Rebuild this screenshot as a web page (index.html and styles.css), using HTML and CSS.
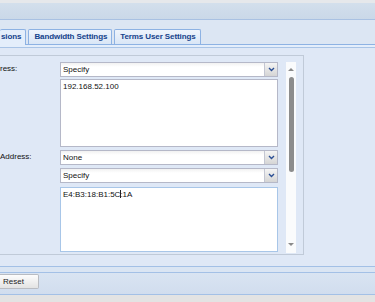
FILE: index.html
```html
<!DOCTYPE html>
<html>
<head>
<title>Access Settings</title>
<meta name="viewport" content="width=device-width, initial-scale=1.0">
<link rel="stylesheet" href="styles.css">
</head>
<body>

<div class="shell">
    <div class="topline"></div>
    <div class="header"></div>

    <div class="tabstrip">
        <div class="tab active">sions</div>
        <div class="tab">Bandwidth Settings</div>
        <div class="tab">Terms User Settings</div>
    </div>
    <div class="tabfoot"></div>

    <div class="panel-body">
        <div class="fieldset">
            <div class="form">
                <div class="item">
                    <label>ress:</label>
                    <div class="fields">
                        <div class="combo">Specify<span class="trigger"><svg width="7" height="5" viewBox="0 0 7 5"><path d="M1 1 L3.5 3.5 L6 1" fill="none" stroke="#2b4f94" stroke-width="1.4"/></svg></span></div>
                        <div class="area area-ip">192.168.52.100</div>
                    </div>
                </div>
                <div class="item">
                    <label>Address:</label>
                    <div class="fields fields-mac">
                        <div class="combo">None<span class="trigger"><svg width="7" height="5" viewBox="0 0 7 5"><path d="M1 1 L3.5 3.5 L6 1" fill="none" stroke="#2b4f94" stroke-width="1.4"/></svg></span></div>
                        <div class="combo">Specify<span class="trigger"><svg width="7" height="5" viewBox="0 0 7 5"><path d="M1 1 L3.5 3.5 L6 1" fill="none" stroke="#2b4f94" stroke-width="1.4"/></svg></span></div>
                        <div class="area area-mac focused">E4:B3:18:B1:5C<span class="caret"></span>:1A</div>
                    </div>
                </div>
            </div>

            <div class="scroll">
                <div class="arrow arrow-up"></div>
                <div class="thumb"></div>
                <div class="arrow arrow-down"></div>
            </div>
        </div>
    </div>

    <div class="footer">
        <div class="footer-gap"></div>
        <div class="buttonbar">
            <button type="button" class="btn">Reset</button>
        </div>
    </div>
    <div class="bottomline"></div>
</div>

</body>
</html>
```

FILE: styles.css
```css
body {
    margin: 0;
    background-color: #e4e6e9;
}
.shell {
    width: 375px;
    height: 302px;
    overflow: hidden;
    background-color: #dfe8f6;
    font-family: "Liberation Sans", Arial, sans-serif;
    font-size: 8px;
    color: #111;
}
.topline {
    height: 3px;
    background-color: #e6e8eb;
}
.header {
    height: 16px;
    background: linear-gradient(#d3dfec, #cad8e8);
    border-bottom: 1px solid #a9c1e2;
}

/* tabs */
.tabstrip {
    display: flex;
    gap: 2px;
    height: 15px;
    padding-top: 9px;
    background-color: #dce6f3;
    border-bottom: 1px solid #8db2e3;
}
.tab {
    height: 14px;
    line-height: 14px;
    padding: 0 4px 0 5px;
    border: 1px solid #8db2e3;
    border-bottom: none;
    border-radius: 2px 2px 0 0;
    background: linear-gradient(#eef4fc, #d9e6f6);
    color: #15428b;
    font-weight: bold;
    letter-spacing: -0.1px;
}
.tab.active {
    padding-left: 1px;
    padding-right: 4px;
    border-left: none;
    background: #e4eefb;
    height: 15px;
}
.tabfoot {
    height: 2px;
    background-color: #e4eefb;
    border-bottom: 1px solid #a9c4e6;
}

/* form area */
.panel-body {
    height: 218px;
    padding-top: 7px;
    box-sizing: border-box;
}
.fieldset {
    display: flex;
    width: 304px;
    height: 200px;
    box-sizing: border-box;
    padding: 6px 7px 1px 0;
    border: 1px solid #c0cad8;
    border-left: none;
}
.form {
    display: flex;
    flex-direction: column;
    gap: 3px;
}
.item {
    display: flex;
}
.item label {
    width: 60px;
    line-height: 14px;
}
.fields {
    display: flex;
    flex-direction: column;
    gap: 2px;
    width: 218px;
}
.fields-mac {
    gap: 3px;
}
.combo {
    position: relative;
    height: 15px;
    line-height: 13px;
    box-sizing: border-box;
    padding-left: 2px;
    border: 1px solid #b5b8c8;
    background: linear-gradient(#f1f1f1, #ffffff 4px);
}
.trigger {
    position: absolute;
    top: 0;
    right: 0;
    width: 12px;
    height: 13px;
    display: flex;
    align-items: center;
    justify-content: center;
    border-left: 1px solid #c3c6d2;
    background: linear-gradient(#f4f4f4, #d5d5d5);
}
.area {
    box-sizing: border-box;
    padding: 2px 2px;
    line-height: 10px;
    border: 1px solid #b5b8c8;
    background-color: #fff;
}
.area-ip {
    height: 68px;
}
.area-mac {
    height: 65px;
    margin-top: 1px;
}
.area.focused {
    border-color: #a8c6e8;
}
.caret {
    display: inline-block;
    width: 1px;
    height: 8px;
    margin-right: -1px;
    vertical-align: -1px;
    background-color: #222;
}

/* scrollbar */
.scroll {
    display: flex;
    flex-direction: column;
    align-items: center;
    width: 10px;
    margin-left: 8px;
    background-color: #fafbfc;
}
.arrow {
    width: 0;
    height: 0;
    border-left: 3px solid transparent;
    border-right: 3px solid transparent;
}
.arrow-up {
    margin-top: 6px;
    border-bottom: 3px solid #8a8a8a;
}
.thumb {
    width: 5px;
    height: 95px;
    margin-top: 6px;
    border-radius: 3px;
    background-color: #8c8c8c;
}
.arrow-down {
    margin-top: auto;
    margin-bottom: 7px;
    border-top: 3px solid #8a8a8a;
}

/* footer */
.footer {
    border-top: 1px solid #a3c0e6;
}
.footer-gap {
    height: 5px;
    background-color: #dae5f3;
    border-bottom: 1px solid #a3c0e6;
}
.buttonbar {
    height: 22px;
    padding-top: 1px;
    box-sizing: border-box;
    background: linear-gradient(#d9e4f2, #d1ddee);
    border-bottom: 1px solid #a3c0e6;
}
.btn {
    display: block;
    width: 39px;
    height: 15px;
    padding: 0 0 0 3px;
    text-align: left;
    font-family: inherit;
    font-size: 8px;
    color: #222;
    border: 1px solid #b9bcc2;
    border-left: none;
    border-radius: 0 2px 2px 0;
    background: linear-gradient(#fdfdfd, #e3e3e3);
}
.bottomline {
    height: 7px;
    background-color: #e3e3e3;
}
```
